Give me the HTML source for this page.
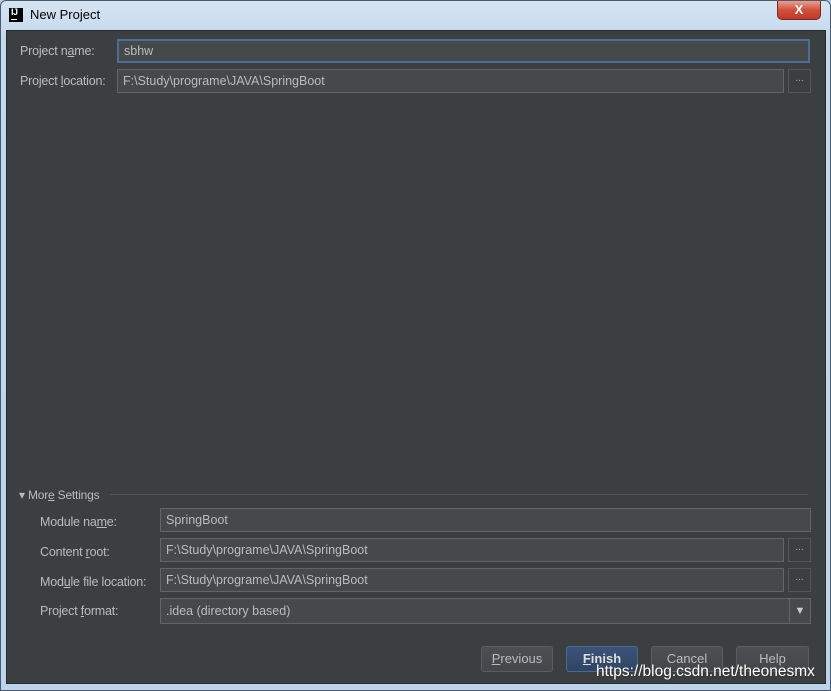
<!DOCTYPE html>
<html><head><meta charset="utf-8"><style>
*{box-sizing:border-box;margin:0;padding:0}
body{width:831px;height:691px;overflow:hidden;background:#b9d1ea;font-family:"Liberation Sans","DejaVu Sans",sans-serif;position:relative}
.frame{position:absolute;left:0;top:0;width:831px;height:691px;background:linear-gradient(#d6e4f2,#c2d8ee 40px,#bcd3ec);border:1px solid #4a5a6a;border-radius:6px 6px 0 0}
.title{position:absolute;left:30px;top:7px;font-size:13px;color:#000}
.logo{position:absolute;left:9px;top:8px;width:14px;height:14px;background:#000;color:#fff;font-size:9px;font-weight:bold;line-height:9px;padding-left:2px;letter-spacing:-0.5px}
.logo:after{content:"";position:absolute;left:2px;bottom:2px;width:6px;height:1px;background:#fff}
.close{position:absolute;left:777px;top:1px;width:44px;height:19px;border:1px solid #7a2a20;border-top:none;border-radius:0 0 5px 5px;background:linear-gradient(#e8a090,#d0503a 50%,#c0382a);color:#fff;font-weight:bold;font-size:13px;text-align:center;line-height:18px}
.content{position:absolute;left:6px;top:30px;width:820px;height:654px;background:#3c3f41;border:1px solid #2a2a2a}
.l{position:absolute;font-size:12.5px;color:#bbbbbb;letter-spacing:-0.2px}
.f{position:absolute;background:#45494a;border:1px solid #646464;color:#bbbbbb;font-size:12.5px;padding-left:5px;line-height:22px}
.b{position:absolute;width:23px;height:23px;background:#3c3f41;border:1px solid #555;color:#aaa;font-size:10px;text-align:center;line-height:18px}
.btn{position:absolute;top:646px;height:26px;border:1px solid #5a5d5f;border-radius:3px;background:linear-gradient(#4c5052,#43474a);color:#bbbbbb;font-size:13px;text-align:center;line-height:24px}
u{text-decoration:underline}
</style></head><body>
<div class="frame"></div>
<div class="logo">IJ</div>
<div class="title">New Project</div>
<div class="close">X</div>
<div class="content"></div>
<div class="l" style="left:20px;top:44px">Project n<u>a</u>me:</div>
<div class="f" style="left:117px;top:39px;width:693px;height:24px;border:2px solid #4a6e96;line-height:20px;padding-left:5px">sbhw</div>
<div class="l" style="left:20px;top:74px">Project <u>l</u>ocation:</div>
<div class="f" style="left:117px;top:69px;width:667px;height:24px">F:\Study\programe\JAVA\SpringBoot</div>
<div class="b" style="left:788px;top:69px;height:24px">...</div>

<div class="l" style="left:19px;top:488px;font-size:12px">&#9662; Mor<u>e</u> Settings</div>
<div style="position:absolute;left:110px;top:494px;width:698px;height:1px;background:#555"></div>

<div class="l" style="left:40px;top:515px">Module na<u>m</u>e:</div>
<div class="f" style="left:160px;top:508px;width:651px;height:24px">SpringBoot</div>
<div class="l" style="left:40px;top:545px">Content <u>r</u>oot:</div>
<div class="f" style="left:160px;top:538px;width:624px;height:24px">F:\Study\programe\JAVA\SpringBoot</div>
<div class="b" style="left:788px;top:538px;height:24px">...</div>
<div class="l" style="left:40px;top:575px">Mod<u>u</u>le file location:</div>
<div class="f" style="left:160px;top:568px;width:624px;height:24px">F:\Study\programe\JAVA\SpringBoot</div>
<div class="b" style="left:788px;top:568px;height:24px">...</div>
<div class="l" style="left:40px;top:604px">Project <u>f</u>ormat:</div>
<div class="f" style="left:160px;top:598px;width:651px;height:26px;line-height:24px">.idea (directory based)</div>
<div style="position:absolute;left:789px;top:599px;width:21px;height:24px;border-left:1px solid #646464;color:#ccc;font-size:11px;text-align:center;line-height:24px">&#9660;</div>

<div class="btn" style="left:481px;width:72px"><u>P</u>revious</div>
<div class="btn" style="left:566px;width:72px;background:linear-gradient(#3b5377,#2f4566);border-color:#4b6a93;color:#ddd;font-weight:bold"><u>F</u>inish</div>
<div class="btn" style="left:651px;width:72px">Cancel</div>
<div class="btn" style="left:736px;width:73px">Help</div>
<div style="position:absolute;left:596px;top:663px;font-size:15.5px;color:#fff;text-shadow:0 0 1px #444,1px 1px 1px #333">https://blog.csdn.net/theonesmx</div>
</body></html>
